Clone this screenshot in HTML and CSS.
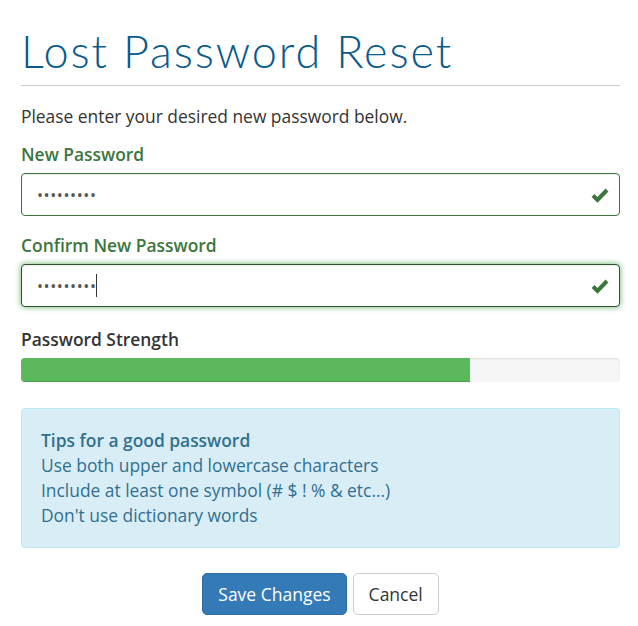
FILE: index.html
```html
<!DOCTYPE html>
<html lang="en">
<head>
<meta charset="utf-8">
<title>Lost Password Reset</title>
<link rel="stylesheet" href="styles.css">
</head>
<body>
<div class="page">
  <h1 class="title">Lost Password Reset</h1>
  <hr class="rule">
  <p class="intro">Please enter your desired new password below.</p>

  <div class="field">
    <label class="label label-ok" for="pw1">New Password</label>
    <div class="input-wrap">
      <input id="pw1" class="input" type="password" value="123456789">
      <svg class="check" viewBox="0 0 18 16" width="18" height="16"><path d="M2 8.5 L6.5 13 L16 3" fill="none" stroke="#3c763d" stroke-width="4" stroke-linejoin="miter"/></svg>
    </div>
  </div>

  <div class="field field-second">
    <label class="label label-ok" for="pw2">Confirm New Password</label>
    <div class="input-wrap">
      <input id="pw2" class="input input-focus" type="password" value="123456789">
      <span class="caret"></span>
      <svg class="check" viewBox="0 0 18 16" width="18" height="16"><path d="M2 8.5 L6.5 13 L16 3" fill="none" stroke="#3c763d" stroke-width="4" stroke-linejoin="miter"/></svg>
    </div>
  </div>

  <div class="strength">
    <div class="label label-dark">Password Strength</div>
    <div class="progress"><div class="progress-bar" style="width:75%"></div></div>
  </div>

  <div class="alert">
    <strong class="alert-title">Tips for a good password</strong>
    <div>Use both upper and lowercase characters</div>
    <div>Include at least one symbol (# $ ! % &amp; etc...)</div>
    <div>Don't use dictionary words</div>
  </div>

  <div class="actions">
    <button class="btn btn-primary" type="button">Save Changes</button>
    <button class="btn btn-default" type="button">Cancel</button>
  </div>
</div>
</body>
</html>
```

FILE: styles.css
```css
* { box-sizing: border-box; }
html, body { margin: 0; padding: 0; background: #fff; }
body {
  font-family: "Open Sans", "Liberation Sans", sans-serif;
  font-size: 17.4px;
  line-height: 25px;
  color: #333;
}
.page {
  width: 599px;
  margin-left: 21px;
  padding-top: 26px;
}
.title {
  margin: 0;
  font-family: "Lato", "Open Sans", sans-serif;
  font-weight: 300;
  font-size: 45px;
  line-height: 50px;
  color: #0a5a8c;
  letter-spacing: 1.9px;
}
.rule {
  margin: 9px 0 0;
  border: 0;
  border-top: 1px solid #ccc;
}
.intro {
  margin: 18px 0 0;
}
.field { margin-top: 13px; }
.field-second { margin-top: 17px; }
.label {
  display: block;
  font-weight: 600;
  margin-bottom: 6px;
}
.label-ok { color: #3c763d; }
.label-dark { color: #333; }
.input-wrap { position: relative; }
.input {
  display: block;
  width: 100%;
  height: 43px;
  padding: 0 15px;
  font-family: "Open Sans", sans-serif;
  font-size: 16px;
  color: #555;
  background: #fff;
  border: 1px solid #3c763d;
  border-radius: 4px;
  box-shadow: inset 0 1px 1px rgba(0,0,0,.075);
  outline: none;
  letter-spacing: 0.6px;
  caret-color: transparent;
}
.input-focus, .input:focus {
  border-color: #2b542c;
  box-shadow: inset 0 1px 1px rgba(0,0,0,.075), 0 0 6px #67b168;
}
.caret {
  position: absolute;
  left: 75px;
  top: 10px;
  width: 1px;
  height: 23px;
  background: #333;
}
.check {
  position: absolute;
  right: 11px;
  top: 14px;
}
.strength { margin-top: 20px; }
.progress {
  height: 24px;
  background: #f5f5f5;
  border-radius: 4px;
  overflow: hidden;
  box-shadow: inset 0 1px 2px rgba(0,0,0,.1);
}
.progress-bar {
  height: 100%;
  background: #5cb85c;
  box-shadow: inset 0 -1px 0 rgba(0,0,0,.15);
}
.alert {
  margin-top: 26px;
  padding: 19px 19px 19px;
  background: #d9edf7;
  border: 1px solid #bce8f1;
  border-radius: 4px;
  color: #31708f;
  line-height: 25px;
}
.alert-title { font-weight: 600; display: block; }
.actions {
  display: flex;
  justify-content: center;
  gap: 6px;
  margin-top: 25px;
}
.btn {
  font-family: "Open Sans", sans-serif;
  font-size: 17.5px;
  height: 42px;
  padding: 0 15px;
  border-radius: 5px;
  border: 1px solid transparent;
  cursor: pointer;
}
.btn-primary {
  background: #337ab7;
  border-color: #2e6da4;
  color: #fff;
}
.btn-default {
  background: #fff;
  border-color: #ccc;
  color: #333;
}
```
